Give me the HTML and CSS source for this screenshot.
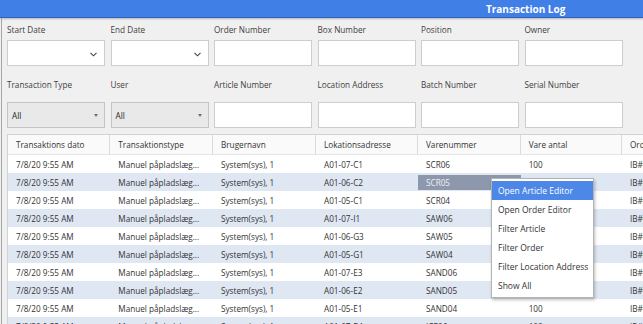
FILE: index.html
```html
<!DOCTYPE html>
<html lang="da">
<head>
  <meta charset="UTF-8" />
  <title>Transaction Log</title>
  <link rel="stylesheet" href="styles.css">
</head>
<body>

  <div class="titlebar"><span class="title">Transaction Log</span></div>

  <div class="window">
    <!-- Filtre -->
    <div class="filters">
      <span class="label">Start Date</span>
      <span class="label">End Date</span>
      <span class="label">Order Number</span>
      <span class="label">Box Number</span>
      <span class="label">Position</span>
      <span class="label">Owner</span>

      <div class="box date"><svg class="chev" width="7" height="5" viewBox="0 0 7 5"><polyline points="0.5,0.8 3.5,3.8 6.5,0.8" fill="none" stroke="#444" stroke-width="1.1"/></svg></div>
      <div class="box date"><svg class="chev" width="7" height="5" viewBox="0 0 7 5"><polyline points="0.5,0.8 3.5,3.8 6.5,0.8" fill="none" stroke="#444" stroke-width="1.1"/></svg></div>
      <div class="box"></div>
      <div class="box"></div>
      <div class="box"></div>
      <div class="box"></div>

      <span class="label">Transaction Type</span>
      <span class="label">User</span>
      <span class="label">Article Number</span>
      <span class="label">Location Address</span>
      <span class="label">Batch Number</span>
      <span class="label">Serial Number</span>

      <div class="box combo">All<span class="tri"></span></div>
      <div class="box combo">All<span class="tri"></span></div>
      <div class="box"></div>
      <div class="box"></div>
      <div class="box"></div>
      <div class="box"></div>
    </div>

    <!-- Tabel -->
    <div class="grid">
      <div class="row head">
        <div class="cell">Transaktions dato</div>
        <div class="cell">Transaktionstype</div>
        <div class="cell">Brugernavn</div>
        <div class="cell">Lokationsadresse</div>
        <div class="cell">Varenummer</div>
        <div class="cell">Vare antal</div>
        <div class="cell">Ordrenummer</div>
      </div>
      <div id="rows"></div>
    </div>
  </div>

  <!-- Kontekstmenu -->
  <div class="menu">
    <div class="item active">Open Article Editor</div>
    <div class="item">Open Order Editor</div>
    <div class="item">Filter Article</div>
    <div class="item">Filter Order</div>
    <div class="item">Filter Location Address</div>
    <div class="item">Show All</div>
  </div>

  <script>
    const data = [
      ["A01-07-C1", "SCR06"], ["A01-06-C2", "SCR05"], ["A01-05-C1", "SCR04"],
      ["A01-07-I1", "SAW06"], ["A01-06-G3", "SAW05"], ["A01-05-G1", "SAW04"],
      ["A01-07-E3", "SAND06"], ["A01-06-E2", "SAND05"], ["A01-05-E1", "SAND04"],
      ["A01-07-D1", "ICE06"]
    ];

    const rows = document.getElementById("rows");
    data.forEach((d, i) => {
      const row = document.createElement("div");
      row.className = "row" + (i % 2 ? " alt" : "");
      const cells = ["7/8/20 9:55 AM", "Manuel påpladslæg...", "System(sys), 1", d[0], d[1], "100", "IB#00" + (i + 1)];
      cells.forEach((text, c) => {
        const cell = document.createElement("div");
        cell.className = "cell" + (i === 1 && c === 4 ? " selected" : "");
        cell.textContent = text;
        row.appendChild(cell);
      });
      rows.appendChild(row);
    });
  </script>

</body>
</html>
```

FILE: styles.css
```css
body {
  margin: 0;
  background: #f0f0f0;
  font-family: 'Open Sans', 'Noto Sans', sans-serif;
  font-size: 8.2px;
  color: #333;
  overflow: hidden;
  height: 324px;
}

.titlebar {
  height: 17px;
  background: #3f7fe6;
  border-bottom: 1px solid #2f63bd;
  box-shadow: 0 1px 2px rgba(0, 0, 0, 0.25);
  display: flex;
  align-items: center;
  padding-left: 486px;
}

.title {
  color: #fff;
  font-weight: 700;
  font-size: 10px;
}

.window {
  margin-left: 1px;
  border-left: 1px solid #a6a6a6;
  height: 306px;
}

.filters {
  display: grid;
  grid-template-columns: repeat(6, 98px);
  grid-template-rows: 22px 26px 36px 26px;
  column-gap: 5.5px;
  padding-left: 5px;
  margin-bottom: 6px;
}

.label {
  align-self: center;
  padding-top: 1px;
  color: #404040;
  white-space: nowrap;
}

.box {
  box-sizing: border-box;
  background: #fff;
  border: 1px solid #cdcdcd;
  position: relative;
  display: flex;
  align-items: center;
  padding-left: 4px;
}

.chev {
  position: absolute;
  right: 7px;
  top: 11px;
}

.combo {
  background: #e9e9e9;
  border-color: #c4c4c4;
  color: #222;
}

.tri {
  position: absolute;
  right: 6px;
  top: 11px;
  width: 0;
  height: 0;
  border-left: 2.5px solid transparent;
  border-right: 2.5px solid transparent;
  border-top: 3px solid #707070;
}

/* Tabel */
.grid {
  margin-left: 5px;
  background: #fff;
  border-top: 1px solid #d2d2d2;
  border-left: 1px solid #d2d2d2;
}

.row {
  display: grid;
  grid-template-columns: 102.3px 102.7px 103px 102px 102.7px 101.3px 120px;
  height: 18px;
  align-items: center;
}

.row.alt {
  background: #dfe7f3;
}

.row.head {
  height: 19px;
  background: #fafafa;
  border-bottom: 1px solid #e4e4e4;
  align-items: stretch;
}

.cell {
  padding-left: 8px;
  white-space: nowrap;
  overflow: hidden;
}

.head .cell {
  border-right: 1px solid #dadada;
  display: flex;
  align-items: center;
  color: #333;
}

.cell.selected {
  align-self: stretch;
  margin: 2px 0 1px 0;
  background: #8d98ad;
  color: #eef1f6;
  display: flex;
  align-items: center;
}

/* Kontekstmenu */
.menu {
  position: absolute;
  left: 491px;
  top: 178px;
  width: 101px;
  padding: 2px 0;
  background: #fff;
  border: 1px solid #b4b4b4;
  box-shadow: 1px 2px 3px rgba(0, 0, 0, 0.25);
  font-size: 8.5px;
}

.item {
  height: 19px;
  display: flex;
  align-items: center;
  padding-left: 6px;
  color: #333;
  white-space: nowrap;
}

.item.active {
  background: #4d88e9;
  color: #fff;
}
```
